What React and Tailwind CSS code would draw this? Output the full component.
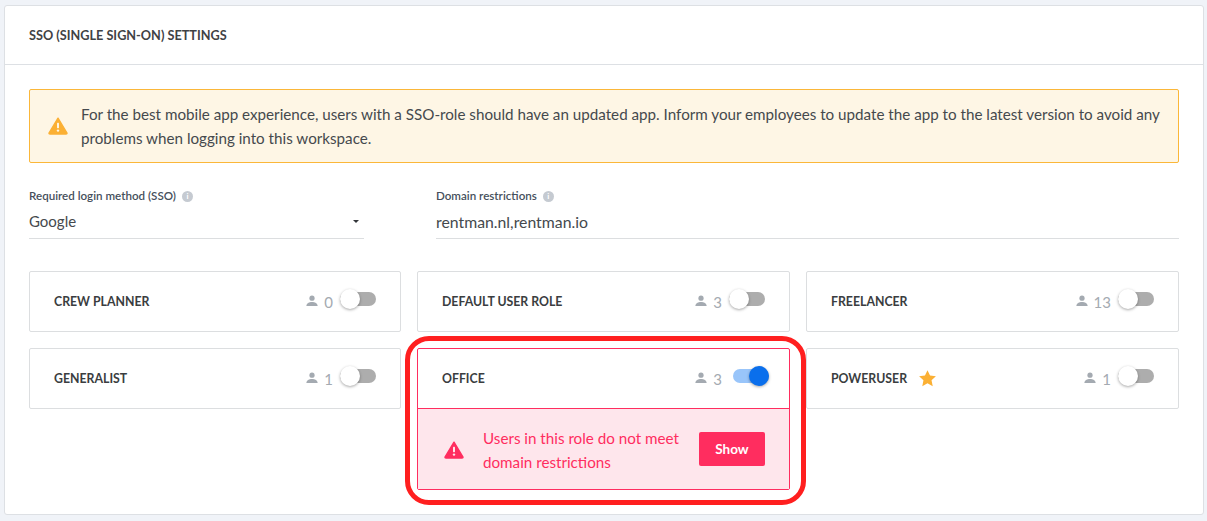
const FONT = "font-['Lato','Noto_Sans',sans-serif]";

function Person({ className = "" }) {
  return (
    <svg viewBox="0 0 12 12" className={`w-[12px] h-[12px] ${className}`} fill="currentColor">
      <circle cx="6" cy="3.2" r="2.6" />
      <path d="M0.4 11 C0.4 8.2 3.2 7 6 7 C8.8 7 11.6 8.2 11.6 11 Z" />
    </svg>
  );
}

function Warn({ className = "" }) {
  return (
    <svg viewBox="0 0 20 18" className={className}>
      <path d="M10 1.2 L19 16 Q19.2 17 18 17 L2 17 Q0.8 17 1 16 Z" fill="currentColor" stroke="currentColor" strokeWidth="1.4" strokeLinejoin="round" />
      <rect x="9" y="5.8" width="2" height="5.4" rx="0.6" fill="var(--bang)" />
      <circle cx="10" cy="13.6" r="1.2" fill="var(--bang)" />
    </svg>
  );
}

function Info() {
  return (
    <span className="inline-flex items-center justify-center w-[11px] h-[11px] rounded-full bg-[#c5cad1] text-white text-[8px] font-bold leading-none">
      i
    </span>
  );
}

function Toggle({ on }) {
  return (
    <div className={`relative w-[36px] h-[14px] -mt-[6px] ${on ? "ml-[11px]" : "ml-[7px] mr-[4px]"}`}>
      <div className={`absolute left-0 right-0 top-0 bottom-0 rounded-full ${on ? "bg-[#99c5fa]" : "bg-[#adadad]"}`} />
      <div
        className={`absolute -top-[3px] w-[20px] h-[20px] rounded-full ${
          on ? "right-0 bg-[#0a6fec]" : "left-0 bg-white"
        } shadow-[0_1px_3px_rgba(0,0,0,0.35)]`}
      />
    </div>
  );
}

function RoleRow({ name, count, on, star }) {
  return (
    <div className="h-[59px] flex items-center pl-[24px] pr-[20px]">
      <span className="text-[12.3px] font-bold text-[#3a3d40] mt-[1px]">{name}</span>
      {star && (
        <svg viewBox="0 0 24 24" className="w-[19px] h-[19px] ml-[11px] text-[#fbb034]" fill="currentColor">
          <path d="M12 1.5 L15.2 8.3 L22.6 9.2 L17.1 14.3 L18.6 21.7 L12 18 L5.4 21.7 L6.9 14.3 L1.4 9.2 L8.8 8.3 Z" />
        </svg>
      )}
      <div className="ml-auto flex items-center text-[#a4aab1]">
        <Person className="-mt-[2px]" />
        <span className="text-[15px] ml-[6px] mt-[2px] leading-none">{count}</span>
        <Toggle on={on} />
      </div>
    </div>
  );
}

function Role(props) {
  return (
    <div className="border border-[#dcdee0] rounded-[2px] bg-white">
      <RoleRow {...props} />
    </div>
  );
}

export default function App() {
  return (
    <div className={`${FONT} h-[521px] bg-[#f0f3f8] pt-[5px] pl-[4px] pr-[3px] overflow-hidden`}>
      <div className="h-[510px] bg-white border border-[#dde0e4] rounded-[3px]">
        <div className="h-[59px] flex items-center pl-[24px] pt-[1px] border-b border-[#dde0e4] text-[12.7px] font-bold text-[#3f4245]">
          SSO (SINGLE SIGN-ON) SETTINGS
        </div>
        <div className="px-[24px] pt-[24px] relative">
          <div className="h-[74px] border border-[#fbb739] bg-[#fef6e5] rounded-[2px] flex items-center pl-[18px] pr-[16px]">
            <span className="[--bang:#fef6e5] text-[#fbb034] shrink-0">
              <Warn className="w-[20px] h-[18px]" />
            </span>
            <p className="ml-[13px] text-[15.2px] leading-[24px] text-[#45494d]">
              For the best mobile app experience, users with a SSO-role should have an updated app. Inform your employees to update the app to the latest version to avoid any problems when logging into this workspace.
            </p>
          </div>

          <div className="flex mt-[25px] gap-[72px]">
            <div className="w-[335px]">
              <div className="flex items-center gap-[6px] text-[11.6px] font-semibold text-[#46505c] leading-[16px]">
                Required login method (SSO) <Info />
              </div>
              <div className="h-[34px] flex items-center justify-between pr-[5px] text-[15px] text-[#45494d] border-b border-[#dcdee0] mt-[1px]">
                Google
                <svg viewBox="0 0 8 4" className="w-[6px] h-[3px]" fill="#33363a"><path d="M0 0 H8 L4 4 Z" /></svg>
              </div>
            </div>
            <div className="flex-1">
              <div className="flex items-center gap-[6px] text-[11.6px] font-semibold text-[#46505c] leading-[16px]">
                Domain restrictions <Info />
              </div>
              <div className="h-[34px] flex items-center text-[15.8px] text-[#45494d] border-b border-[#dcdee0] mt-[1px]">
                rentman.nl,rentman.io
              </div>
            </div>
          </div>

          <div className="grid grid-cols-[372px_373px_373px] gap-[16px] items-start mt-[32px]">
            <Role name="CREW PLANNER" count="0" />
            <Role name="DEFAULT USER ROLE" count="3" />
            <Role name="FREELANCER" count="13" />
            <Role name="GENERALIST" count="1" />
            <div className="relative border border-[#ff2d5f] rounded-[2px] bg-white">
              <RoleRow name="OFFICE" count="3" on />
              <div className="h-[81px] border-t border-[#ff2d5f] bg-[#fee6ec] flex items-center pl-[26px] pr-[24px] text-[#ff2d5f]">
                <span className="[--bang:#fee6ec] shrink-0 mt-[1px]">
                  <Warn className="w-[20px] h-[18px]" />
                </span>
                <p className="ml-[19px] mt-[1px] text-[15.2px] leading-[24px] w-[200px]">
                  Users in this role do not meet domain restrictions
                </p>
                <button className="ml-auto w-[66px] h-[34px] rounded-[2px] bg-[#ff2d5f] text-white text-[13.5px] font-bold">
                  Show
                </button>
              </div>
              <div className="absolute -left-[13px] -right-[17px] -top-[13px] -bottom-[16px] border-[5px] border-[#ff1f1f] rounded-[24px] pointer-events-none" />
            </div>
            <Role name="POWERUSER" count="1" star />
          </div>
        </div>
      </div>
    </div>
  );
}
